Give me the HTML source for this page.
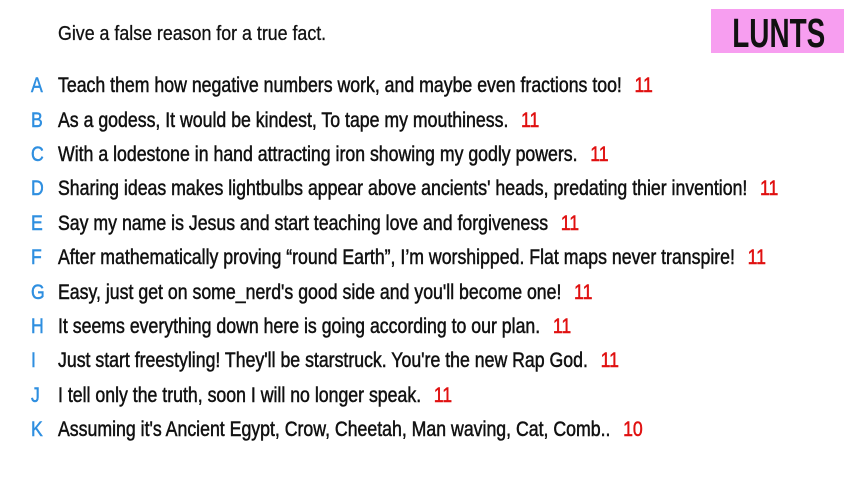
<!DOCTYPE html>
<html><head><meta charset="utf-8"><style>
html,body{margin:0;padding:0;background:#fff;width:853px;height:480px;overflow:hidden}
body{font-family:"Liberation Sans Narrow","Liberation Sans",sans-serif;color:#111;position:relative}
.t{position:absolute;left:58px;top:23px;font-size:20px;-webkit-text-stroke:0.3px #111;transform:scaleX(.89);transform-origin:left;white-space:nowrap}
.box{position:absolute;left:711px;top:9px;width:133px;height:44px;background:#f79ef0}
.box span{position:absolute;left:0;right:0;top:1px;text-align:center;font-size:41px;font-weight:bold;color:#111;transform:scaleX(.68)}
.r{position:absolute;left:0;height:26px;font-size:21px;line-height:26px;white-space:nowrap;-webkit-text-stroke:0.5px #111}
.r b{position:absolute;left:31px;font-weight:normal;color:#2f8fe0;-webkit-text-stroke:0.5px #2f8fe0;transform:scaleX(.84);transform-origin:left}
.r i{position:absolute;left:58px;font-style:normal;transform:scaleX(.843);transform-origin:left}
.r em{font-style:normal;color:#e01010;-webkit-text-stroke:0.5px #e01010;margin-left:15px}
</style></head><body>
<div class="t">Give a false reason for a true fact.</div>
<div class="box"><span>LUNTS</span></div>
<div class="r" style="top:73px"><b>A</b><i>Teach them how negative numbers work, and maybe even fractions too!<em>11</em></i></div>
<div class="r" style="top:108px"><b>B</b><i>As a godess, It would be kindest, To tape my mouthiness.<em>11</em></i></div>
<div class="r" style="top:142px"><b>C</b><i>With a lodestone in hand attracting iron showing my godly powers.<em>11</em></i></div>
<div class="r" style="top:176px"><b>D</b><i>Sharing ideas makes lightbulbs appear above ancients' heads, predating thier invention!<em>11</em></i></div>
<div class="r" style="top:211px"><b>E</b><i>Say my name is Jesus and start teaching love and forgiveness<em>11</em></i></div>
<div class="r" style="top:245px"><b>F</b><i>After mathematically proving “round Earth”, I’m worshipped. Flat maps never transpire!<em>11</em></i></div>
<div class="r" style="top:280px"><b>G</b><i>Easy, just get on some_nerd's good side and you'll become one!<em>11</em></i></div>
<div class="r" style="top:314px"><b>H</b><i>It seems everything down here is going according to our plan.<em>11</em></i></div>
<div class="r" style="top:348px"><b>I</b><i>Just start freestyling! They'll be starstruck. You're the new Rap God.<em>11</em></i></div>
<div class="r" style="top:383px"><b>J</b><i>I tell only the truth, soon I will no longer speak.<em>11</em></i></div>
<div class="r" style="top:417px"><b>K</b><i>Assuming it's Ancient Egypt, Crow, Cheetah, Man waving, Cat, Comb..<em>10</em></i></div>
</body></html>
